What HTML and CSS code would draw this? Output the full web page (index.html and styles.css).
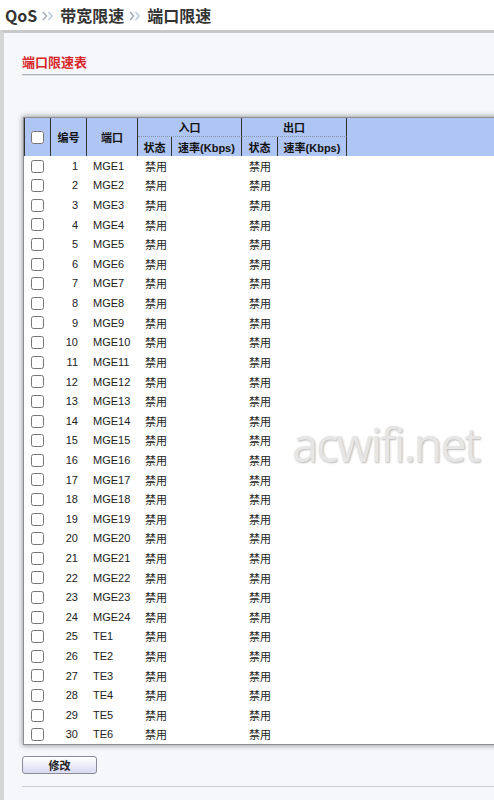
FILE: index.html
```html
<!DOCTYPE html>
<html lang="zh">
<head>
<meta charset="utf-8">
<title>端口限速</title>
<link rel="stylesheet" href="styles.css">
</head>
<body>
<header class="crumb">
  <span>QoS</span>
  <svg class="sep" width="12" height="10" viewBox="0 0 12 10" aria-hidden="true"><path d="M1 1 L4.5 5 L1 9" fill="none" stroke="#a7adb8" stroke-width="1.6"/><path d="M6.5 1 L10 5 L6.5 9" fill="none" stroke="#b9cbe3" stroke-width="1.6"/></svg>
  <span>带宽限速</span>
  <svg class="sep" width="12" height="10" viewBox="0 0 12 10" aria-hidden="true"><path d="M1 1 L4.5 5 L1 9" fill="none" stroke="#a7adb8" stroke-width="1.6"/><path d="M6.5 1 L10 5 L6.5 9" fill="none" stroke="#b9cbe3" stroke-width="1.6"/></svg>
  <span>端口限速</span>
</header>
<main class="content">
  <h2 class="title">端口限速表</h2>
  <div class="table-wrap">
    <table class="grid">
      <colgroup>
        <col class="c-cb"><col class="c-no"><col class="c-port"><col class="c-st1"><col class="c-rate1"><col class="c-st2"><col class="c-rate2"><col>
      </colgroup>
      <thead>
        <tr>
          <th rowspan="2" class="first"><input type="checkbox"></th>
          <th rowspan="2">编号</th>
          <th rowspan="2">端口</th>
          <th colspan="2" class="grp">入口</th>
          <th colspan="2" class="grp">出口</th>
          <th rowspan="2" class="fill"></th>
        </tr>
        <tr>
          <th>状态</th><th>速率(Kbps)</th>
          <th>状态</th><th>速率(Kbps)</th>
        </tr>
      </thead>
      <tbody id="rows"></tbody>
    </table>
  </div>
  <button class="btn" type="button">修改</button>
  <div class="bottom-line"></div>
</main>
<div class="watermark">acwifi.net</div>
<script>
  var ports = [];
  for (var i = 1; i <= 24; i++) ports.push('MGE' + i);
  for (var j = 1; j <= 6; j++) ports.push('TE' + j);
  var html = '';
  ports.forEach(function (p, k) {
    html += '<tr><td class="cb"><input type="checkbox"></td><td class="no">' + (k + 1) +
      '</td><td class="port">' + p + '</td><td class="st">禁用</td><td></td><td class="st">禁用</td><td></td><td></td></tr>';
  });
  document.getElementById('rows').innerHTML = html;
</script>
</body>
</html>
```
FILE: styles.css
```css
html, body {
  margin: 0;
  padding: 0;
}
body {
  background: #fff;
  font-family: "Liberation Sans", "Noto Sans CJK SC", sans-serif;
  color: #222;
  overflow: hidden;
  width: 494px;
  height: 800px;
  position: relative;
}
.crumb {
  height: 30px;
  line-height: 31px;
  padding-left: 5px;
  font-family: "Noto Sans CJK SC", sans-serif;
  font-size: 16px;
  font-weight: bold;
  color: #333;
  white-space: nowrap;
  display: flex;
  align-items: center;
  background: #fff;
}
.crumb .sep {
  margin: 1px 6px 0 5px;
  flex: none;
}
.content {
  border-top: 3px solid #c8c8c8;
  border-left: 4px solid #d5d5d5;
  background: #f5f7fa;
  padding-left: 18px;
  height: 767px;
}
.title {
  margin: 0;
  padding: 20px 0 3px 0;
  font-family: "Noto Sans CJK SC", sans-serif;
  font-size: 13px;
  line-height: 18px;
  font-weight: bold;
  color: #d8282a;
  border-bottom: 1px solid #b0b4bb;
  box-shadow: 0 1px 0 #dde0e4;
}
.table-wrap {
  margin-top: 42px;
  margin-left: 1px;
  width: 520px;
  background: #fff;
  border: 1px solid #8e8e8e;
  box-shadow: 0 0 5px 1px rgba(0, 0, 0, 0.35);
}
.grid {
  border-collapse: separate;
  border-spacing: 0;
  table-layout: fixed;
  width: 100%;
  font-size: 11px;
}
.c-cb { width: 27px; }
.c-no { width: 36px; }
.c-port { width: 51px; }
.c-st1 { width: 34px; }
.c-rate1 { width: 70px; }
.c-st2 { width: 36px; }
.c-rate2 { width: 69px; }
.grid th, .grid td {
  box-sizing: border-box;
  padding: 0;
}
.grid thead th {
  background: #afc5f3;
  height: 19px;
  font-weight: bold;
  color: #111;
  text-align: center;
  border-right: 1px solid #333;
  white-space: nowrap;
}
.grid thead th.first {
  border-left: 1px solid #333;
}
.grid thead th.grp {
  border-bottom: 1px dotted #8a94a8;
}
.grid thead th.fill {
  border-right: none;
}
.grid input[type="checkbox"] {
  width: 13px;
  height: 13px;
  margin: 0;
  vertical-align: middle;
}
.grid tbody tr {
  height: 19.62px;
}
.grid tbody td {
  white-space: nowrap;
  color: #222;
}
.grid td.cb {
  text-align: center;
  padding-right: 1px;
}
.grid td.no {
  text-align: right;
  padding-right: 9px;
}
.grid td.port {
  padding-left: 6px;
}
.grid td.st {
  padding-left: 7px;
}
.btn {
  display: block;
  margin-top: 11px;
  width: 75px;
  height: 18px;
  padding: 0;
  border: 1px solid #8a8a98;
  border-radius: 3px;
  background: linear-gradient(#ffffff, #d9d9f2);
  font-family: "Noto Sans CJK SC", sans-serif;
  font-size: 11px;
  font-weight: bold;
  color: #222;
  line-height: 16px;
}
.bottom-line {
  margin-top: 12px;
  border-top: 1px solid #c9ccd2;
}
.watermark {
  position: absolute;
  left: 292px;
  top: 412px;
  font-family: "Open Sans", sans-serif;
  font-size: 47px;
  letter-spacing: -2.2px;
  color: #e6e6e6;
  text-shadow: 1px 1px 2px #b8b8b8;
  white-space: nowrap;
}
```
